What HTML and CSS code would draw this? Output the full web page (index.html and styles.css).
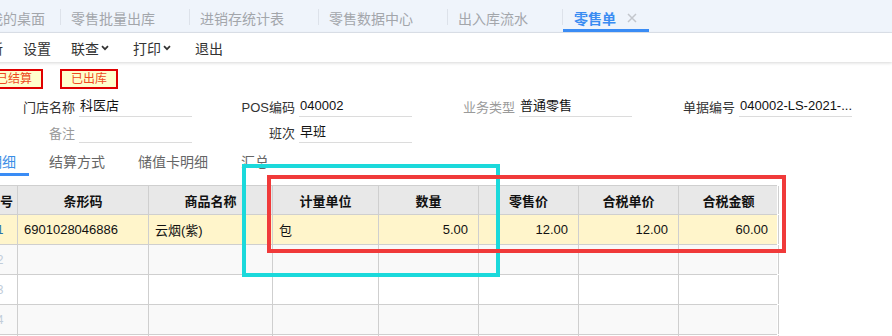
FILE: index.html
```html
<!DOCTYPE html>
<html lang="zh-CN">
<head>
<meta charset="utf-8">
<title>零售单</title>
<link rel="stylesheet" href="styles.css">
</head>
<body>
<div class="page">
  <div class="tabbar">
    <div class="tab first">我的桌面</div>
    <i class="sep"></i>
    <div class="tab">零售批量出库</div>
    <i class="sep"></i>
    <div class="tab">进销存统计表</div>
    <i class="sep"></i>
    <div class="tab">零售数据中心</div>
    <i class="sep"></i>
    <div class="tab">出入库流水</div>
    <i class="sep"></i>
    <div class="tab active">零售单<svg class="close" width="10" height="10" viewBox="0 0 10 10"><path d="M1 1L9 9M9 1L1 9" stroke="#c3c6cc" stroke-width="1.5" fill="none"/></svg></div>
  </div>

  <div class="toolbar">
    <span class="tool">刷新</span>
    <span class="tool">设置</span>
    <span class="tool">联查<svg class="chev" width="8" height="6" viewBox="0 0 8 6"><path d="M1 1.2L4 4.2L7 1.2" stroke="#333" stroke-width="1.7" fill="none"/></svg></span>
    <span class="tool">打印<svg class="chev" width="8" height="6" viewBox="0 0 8 6"><path d="M1 1.2L4 4.2L7 1.2" stroke="#333" stroke-width="1.7" fill="none"/></svg></span>
    <span class="tool">退出</span>
  </div>

  <div class="badges">
    <span class="badge">已结算</span>
    <span class="badge">已出库</span>
  </div>

  <div class="form">
    <div class="field"><label class="lbl">门店名称</label><div class="val">科医店</div></div>
    <div class="field"><label class="lbl">POS编码</label><div class="val">040002</div></div>
    <div class="field"><label class="lbl muted">业务类型</label><div class="val">普通零售</div></div>
    <div class="field"><label class="lbl">单据编号</label><div class="val">040002-LS-2021-...</div></div>
    <div class="field"><label class="lbl muted">备注</label><div class="val"></div></div>
    <div class="field"><label class="lbl">班次</label><div class="val">早班</div></div>
  </div>

  <div class="subtabs">
    <span class="stab active">明细</span>
    <span class="stab">结算方式</span>
    <span class="stab">储值卡明细</span>
    <span class="stab">汇总</span>
  </div>

  <div class="grid">
    <div class="row head">
      <div class="c num">序号</div>
      <div class="c">条形码</div>
      <div class="c">商品名称</div>
      <div class="c">计量单位</div>
      <div class="c">数量</div>
      <div class="c">零售价</div>
      <div class="c">合税单价</div>
      <div class="c">合税金额</div>
    </div>
    <div class="row sel">
      <div class="c num first">1</div>
      <div class="c">6901028046886</div>
      <div class="c">云烟(紫)</div>
      <div class="c">包</div>
      <div class="c r">5.00</div>
      <div class="c r">12.00</div>
      <div class="c r">12.00</div>
      <div class="c r">60.00</div>
    </div>
    <div class="row alt">
      <div class="c num">2</div><div class="c"></div><div class="c"></div><div class="c"></div><div class="c"></div><div class="c"></div><div class="c"></div><div class="c"></div>
    </div>
    <div class="row">
      <div class="c num">3</div><div class="c"></div><div class="c"></div><div class="c"></div><div class="c"></div><div class="c"></div><div class="c"></div><div class="c"></div>
    </div>
    <div class="row alt">
      <div class="c num">4</div><div class="c"></div><div class="c"></div><div class="c"></div><div class="c"></div><div class="c"></div><div class="c"></div><div class="c"></div>
    </div>
    <div class="row">
      <div class="c num">5</div><div class="c"></div><div class="c"></div><div class="c"></div><div class="c"></div><div class="c"></div><div class="c"></div><div class="c"></div>
    </div>
  </div>
</div>
<div class="mark cyan"></div>
<div class="mark red"></div>
</body>
</html>
```

FILE: styles.css
```css
* { box-sizing: border-box; }
html, body {
  margin: 0;
  padding: 0;
  width: 892px;
  height: 336px;
  overflow: hidden;
  background: #fff;
}
body {
  position: relative;
  font-family: "Liberation Sans", "Noto Sans CJK SC", sans-serif;
  color: #333;
}
.page { width: 892px; }

/* top tab bar */
.tabbar {
  display: flex;
  align-items: center;
  height: 33px;
  background: #eff4fb;
  border-bottom: 1px solid #dfe4ec;
  white-space: nowrap;
}
.tab {
  display: flex;
  align-items: center;
  height: 32px;
  padding: 4px 34px 0 10px;
  font-size: 14px;
  color: #a3a6ab;
  flex: none;
}
.tab.first { margin-left: -22px; padding: 4px 15px 0 11px; }
.tab.active {
  padding: 4px 12px 0 11px;
  color: #3a8cf2;
  font-weight: bold;
  box-shadow: inset 0 -3px 0 #3a8cf5;
}
.close { margin-left: 11px; }
.sep {
  display: block;
  width: 1px;
  height: 16px;
  margin-top: 2px;
  background: #dde2ea;
  flex: none;
}

/* toolbar */
.toolbar {
  display: flex;
  align-items: center;
  height: 29px;
  margin-left: -35px;
  box-shadow: 0 1px 3px rgba(0,0,0,0.16);
  background: #fff;
}
.tool {
  display: flex;
  align-items: center;
  padding: 0 10px;
  font-size: 14px;
  color: #333;
  white-space: nowrap;
}
.chev { margin: 0 4px 0 2px; }

/* badges */
.badges {
  display: flex;
  gap: 17px;
  margin: 7px 0 0 -15px;
}
.badge {
  height: 20px;
  line-height: 16px;
  padding: 0 9px;
  border: 2px solid #e00000;
  background: #ffffcc;
  color: #ee4a22;
  font-size: 12px;
}

/* form */
.form {
  display: grid;
  grid-template-columns: repeat(4, 220px);
  row-gap: 4px;
  margin: 6px 0 0 -28px;
}
.field {
  display: flex;
  align-items: center;
  gap: 4px;
  height: 22px;
}
.lbl {
  width: 103px;
  text-align: right;
  font-size: 13px;
  color: #333;
}
.lbl.muted { color: #9a9a9a; }
.val {
  width: 113px;
  height: 22px;
  line-height: 21px;
  padding-left: 1px;
  border-bottom: 1px solid #dcdcdc;
  font-size: 13px;
  color: #111;
  white-space: nowrap;
  overflow: hidden;
}

/* sub tabs */
.subtabs {
  display: flex;
  gap: 7px;
  margin: 5px 0 0 -25px;
}
.stab {
  height: 28px;
  padding: 4px 13px 4px;
  line-height: 20px;
  font-size: 14px;
  color: #666;
}
.stab.active {
  color: #3a8ee6;
  box-shadow: inset 0 -3px 0 #3a8cf5;
}

/* data grid */
.grid {
  margin: 9px 0 0 -18px;
  width: 795px;
}
.row {
  display: grid;
  grid-template-columns: 35px 131px 124px 106px 100px 100px 100px 100px;
  height: 30px;
  border-bottom: 1px solid #cfcfcf;
  border-left: 1px solid #cfcfcf;
}
.row.head {
  border-top: 1px solid #cfcfcf;
  background: #e8e8e8;
}
.row.sel { background: #fff5cb; }
.row.alt { background: #f9f9f9; }
.c {
  border-right: 1px solid #cfcfcf;
  padding: 0 6px;
  display: flex;
  align-items: center;
  font-size: 13px;
  color: #111;
  white-space: nowrap;
  overflow: hidden;
}
.head .c {
  justify-content: center;
  font-weight: bold;
  color: #111;
  padding: 0;
}
.c.r { justify-content: flex-end; padding-right: 10px; }
.c.num {
  justify-content: center;
  padding: 0;
  color: #c2cdd9;
  font-size: 12px;
}
.head .c.num { color: #111; font-size: 13px; }
.c.num.first { color: #2a73a8; }

/* annotation frames */
.mark {
  position: absolute;
  border: 4px solid;
  pointer-events: none;
}
.mark.cyan {
  left: 242px;
  top: 164px;
  width: 258px;
  height: 113px;
  border-color: #1bd9db;
}
.mark.red {
  left: 267px;
  top: 175px;
  width: 519px;
  height: 78px;
  border-color: #f03a3a;
}
```
